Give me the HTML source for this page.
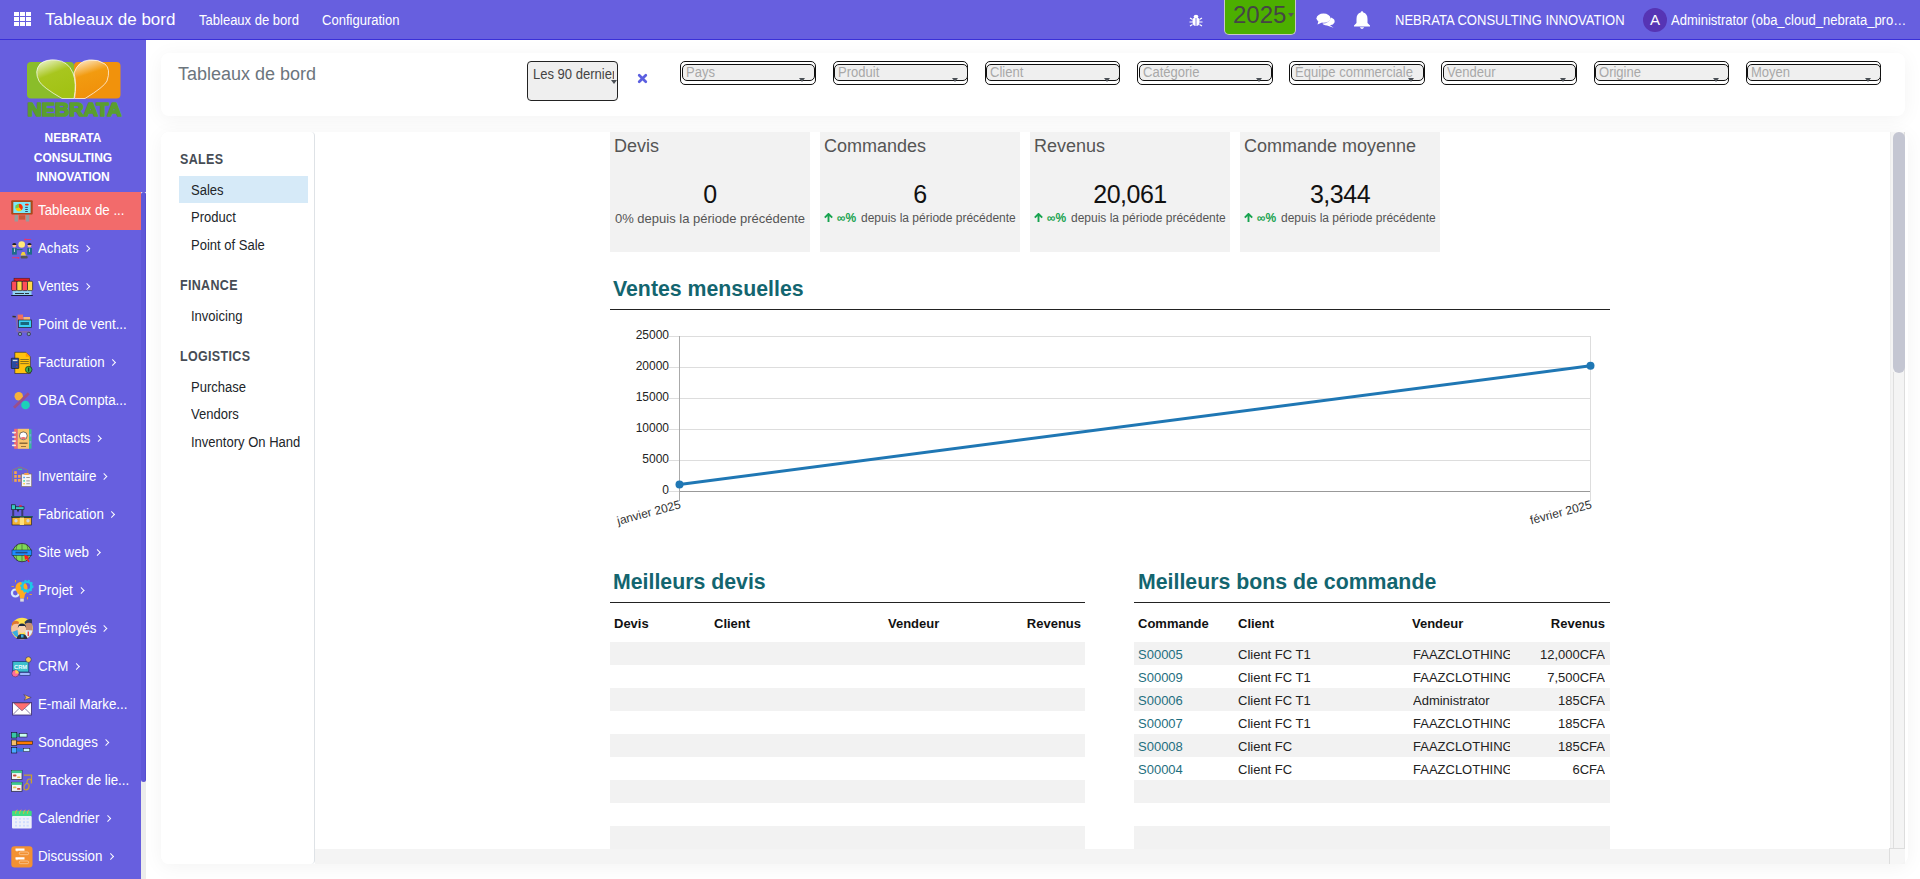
<!DOCTYPE html>
<html><head><meta charset="utf-8">
<style>
*{box-sizing:border-box;margin:0;padding:0}
html,body{width:1920px;height:879px;overflow:hidden;background:#fff;font-family:"Liberation Sans",sans-serif;color:#212529;position:relative}
.abs{position:absolute}
.nw{white-space:nowrap}
#nav{position:absolute;left:0;top:0;width:1920px;height:40px;background:#675fdf;border-bottom:1px solid #3a30d8}
#nav .t{position:absolute;color:#fff;white-space:nowrap}
#side{position:absolute;left:0;top:40px;width:146px;height:839px;background:#675fdf;overflow:hidden}
.mi{position:absolute;left:0;width:141px;height:38px;color:#fff;font-size:14px;white-space:nowrap}
.mi .ic{position:absolute;left:8px;top:4px}
.mi .tx{position:absolute;left:38px;top:10px;line-height:17px;transform:scaleX(.95);transform-origin:0 0}
.mi.act{background:#f26b6b}
.ch{display:inline-block;width:5px;height:5px;border-right:1.3px solid #fff;border-top:1.3px solid #fff;transform:rotate(45deg);margin-left:6px;position:relative;top:-2px}
.brand{position:absolute;left:0;width:146px;text-align:center;color:#fff;font-weight:bold;font-size:12px;line-height:19.5px}
#sbtrack{position:absolute;left:141px;top:152px;width:5px;height:687px;background:#ececec}
#sbthumb{position:absolute;left:141px;top:152px;width:5px;height:590px;background:#5f57d8;border-radius:3px;border-right:1px solid #554dd0}
/* main */
.panel{position:absolute;background:#fff;border-radius:8px;box-shadow:0 3px 20px rgba(0,0,0,.05)}
.cp-title{position:absolute;left:178px;top:64px;font-size:18px;color:#6c757d;white-space:nowrap}
.fsel{position:absolute;top:61px;width:135.5px;height:24px;border:1.5px solid #111;border-radius:5px;background:#fff}
.fsel .in{position:absolute;left:0.5px;right:-0.5px;top:1.5px;height:17px;border:1.5px solid #111;border-radius:5px;background:#efefef;overflow:hidden}
.fsel .ph{position:absolute;left:3px;top:0px;font-size:14px;line-height:15px;color:#a8a8a8;white-space:nowrap;transform:scaleX(.93);transform-origin:0 0}
.fsel .ar{position:absolute;right:9.5px;top:16px;width:0;height:0;border-left:3.5px solid transparent;border-right:3.5px solid transparent;border-top:4px solid #4a4f55}
.leftnav{position:absolute;left:161px;top:132px;width:154px;height:732px;border-right:1px solid #dee2e6;background:#fff}
.sec{position:absolute;left:180px;font-size:14.5px;font-weight:bold;color:#464c55;letter-spacing:.4px;transform:scaleX(.86);transform-origin:0 0;margin-top:-1px}
.lk{position:absolute;left:191px;font-size:14px;transform:scaleX(.93);transform-origin:0 0;margin-top:0px;color:#212529;white-space:nowrap}
.card{position:absolute;top:132px;width:200px;height:120px;background:#f2f2f2}
.card .h{position:absolute;left:4px;top:4px;font-size:18px;color:#555;white-space:nowrap}
.card .v{position:absolute;left:0;right:0;top:48px;text-align:center;font-size:25px;letter-spacing:-.5px;color:#111}
.card .s{position:absolute;left:0;right:0;top:79px;text-align:center;font-size:13px;color:#555;white-space:nowrap}
.card .g{color:#17a34f}
.card .ar2{position:absolute;left:4px;top:81px}
.card .inf{position:absolute;left:17px;top:79px;font-size:12px;font-weight:bold;color:#17a34f;white-space:nowrap}
.card .dp{position:absolute;left:41px;top:79px;font-size:12px;color:#555;white-space:nowrap}
.h2{position:absolute;font-size:21.3px;font-weight:bold;color:#13656f;white-space:nowrap}
.hr{position:absolute;height:1px;background:#222}
.tbl{position:absolute;width:476px}
.th{position:absolute;font-size:13px;font-weight:bold;color:#111;white-space:nowrap}
.row{position:absolute;left:0;width:476px;height:23px}
.row.g{background:#f2f2f2}
.td{position:absolute;top:5px;font-size:13px;color:#222;white-space:nowrap;overflow:hidden}
.lnk{color:#1f6f80}
</style></head><body>
<div id="nav">
  <svg class="abs" style="left:14px;top:12px" width="18" height="15" viewBox="0 0 18 15">
    <g fill="#fff"><rect x="0" y="0" width="5" height="4"/><rect x="6" y="0" width="5" height="4"/><rect x="12" y="0" width="5" height="4"/>
    <rect x="0" y="5" width="5" height="4"/><rect x="6" y="5" width="5" height="4"/><rect x="12" y="5" width="5" height="4"/>
    <rect x="0" y="10" width="5" height="4"/><rect x="6" y="10" width="5" height="4"/><rect x="12" y="10" width="5" height="4"/></g>
  </svg>
  <div class="t" style="left:45px;top:10px;font-size:17px">Tableaux de bord</div>
  <div class="t" style="left:199px;top:12px;font-size:14px;transform:scaleX(.93);transform-origin:0 0">Tableaux de bord</div>
  <div class="t" style="left:322px;top:12px;font-size:14px;transform:scaleX(.93);transform-origin:0 0">Configuration</div>
  <!-- right side -->
  <svg class="abs" style="left:1189px;top:13px" width="14" height="14" viewBox="0 0 14 14"><g fill="#fff"><ellipse cx="7" cy="8.5" rx="3.6" ry="4.5"/><ellipse cx="7" cy="3.5" rx="2.3" ry="1.8"/><path d="M1 5 L3.5 6.5 M13 5 L10.5 6.5 M0.5 9 L3.5 9 M13.5 9 L10.5 9 M1 13 L3.5 11.5 M13 13 L10.5 11.5" stroke="#fff" stroke-width="1.2"/></g><rect x="6.6" y="5" width=".8" height="8" fill="#675fdf"/></svg>
  <div class="abs" style="left:1224px;top:-2px;width:72px;height:37px;background:#4caf00;border:1px solid #c8c8c8;border-top:none;border-radius:0 0 5px 5px"></div>
  <div class="abs nw" style="left:1233px;top:1px;font-size:24px;color:#454545">2025</div>
  <div class="abs" style="left:1288px;top:13px;width:0;height:0;border-left:3.5px solid transparent;border-right:3.5px solid transparent;border-top:4px solid #555"></div>
  <svg class="abs" style="left:1316px;top:12px" width="20" height="17" viewBox="0 0 20 17"><ellipse cx="7.5" cy="6.2" rx="7" ry="4.6" fill="#fff"/><path d="M2.5 9 L1.5 12.5 L6 10.5 Z" fill="#fff"/><path d="M15 5.5 Q19.5 7 18.5 10.5 Q17.5 13 14 13.2 L17.5 15.8 L11 13.5 Q7 13 6.5 11.5 Q13 11.5 15 5.5 Z" fill="#fff"/></svg>
  <svg class="abs" style="left:1353px;top:10px" width="18" height="20" viewBox="0 0 18 20"><path d="M9 1.2 Q10.2 1.2 10.3 2.6 Q14.5 3.8 14.5 9 L14.5 13 L17 15.5 L17 16.5 L1 16.5 L1 15.5 L3.5 13 L3.5 9 Q3.5 3.8 7.7 2.6 Q7.8 1.2 9 1.2 Z" fill="#fff"/><path d="M6.8 17.3 Q9 20.5 11.2 17.3 Z" fill="#fff"/></svg>
  <div class="t" style="left:1395px;top:12px;font-size:14px;transform:scaleX(.93);transform-origin:0 0">NEBRATA CONSULTING INNOVATION</div>
  <div class="abs" style="left:1643px;top:8px;width:24px;height:24px;border-radius:50%;background:#5634b4;color:#fff;font-size:15px;text-align:center;line-height:24px">A</div>
  <div class="t" style="left:1671px;top:12px;font-size:14px;transform:scaleX(.93);transform-origin:0 0">Administrator (oba_cloud_nebrata_pro…</div>
</div>
<div id="side">
  <svg class="abs" style="left:26px;top:19px" width="98" height="58" viewBox="0 0 98 58">
    <defs>
      <linearGradient id="hg" x1="0" y1="0" x2="0.4" y2="1"><stop offset="0" stop-color="#f4f9e0"/><stop offset=".45" stop-color="#a8c61e"/><stop offset="1" stop-color="#a2c214"/></linearGradient>
      <linearGradient id="ho" x1="0" y1="0" x2="0.3" y2="1"><stop offset="0" stop-color="#fff3e0"/><stop offset=".45" stop-color="#f29b10"/><stop offset="1" stop-color="#f0900a"/></linearGradient>
    </defs>
    <rect x="1" y="3" width="47" height="36.5" rx="4" fill="#8abd2a"/>
    <rect x="48" y="3" width="46.5" height="36.5" rx="4" fill="#f1920c"/>
    <path d="M48 39.5 L36 39.5 Q16 28 13 22 Q8 12 14 5 Q20 0 30 1 Q42 2 47 14 Q51 25 48 39.5 Z" fill="url(#hg)" stroke="#fff" stroke-width=".7"/>
    <path d="M48.5 39.5 L59 39.5 Q78 28 81 22 Q85 10 79 5 Q72 0 63 1 Q52 2 48 14 Q51 25 48.5 39.5 Z" fill="url(#ho)" stroke="#fff" stroke-width=".7"/>
    <text x="48.5" y="56.5" text-anchor="middle" font-family="Liberation Sans" font-weight="bold" font-size="18" fill="#5a9e2e" stroke="#5a9e2e" stroke-width="1.6" stroke-linejoin="round" textLength="94" lengthAdjust="spacingAndGlyphs">NEBRATA</text>
  </svg>
  <div class="brand" style="top:89px">NEBRATA</div>
  <div class="brand" style="top:108.5px">CONSULTING</div>
  <div class="brand" style="top:128px">INNOVATION</div>
<div class="mi act" style="top:152px"><svg class="ic" width="30" height="30" viewBox="0 0 30 30"><rect x="3.2" y="4.3" width="21.5" height="14.3" rx="1" fill="#a8491a"/><rect x="5.3" y="6" width="17.3" height="11" fill="#7de8f8"/>
<path d="M11 11.5 L11 7.7 A3.8 3.8 0 0 1 13.7 14.2 Z" fill="#ff3300"/><path d="M11 11.5 L13.7 14.2 A3.8 3.8 0 0 1 7.4 12.6 Z" fill="#ffcc00"/><path d="M11 11.5 L7.4 12.6 A3.8 3.8 0 0 1 11 7.7 Z" fill="#7ac943"/>
<rect x="17" y="7.8" width="3.7" height="1.8" rx=".8" fill="#ff2a00"/><rect x="17.2" y="10.9" width="2.6" height=".9" fill="#335"/><rect x="17.2" y="13" width="2.6" height=".9" fill="#335"/><rect x="17.2" y="15" width="2.6" height=".9" fill="#335"/>
<rect x="6.6" y="19" width="3.4" height="6.5" fill="#9a9a9a"/><rect x="17.8" y="19" width="3.4" height="6.5" fill="#9a9a9a"/><rect x="10.9" y="19.3" width="6.2" height="4.3" fill="#c8573a"/></svg><div class="tx">Tableaux de ...</div></div>
<div class="mi" style="top:190px"><svg class="ic" width="30" height="30" viewBox="0 0 30 30"><circle cx="6.3" cy="11.6" r="1.9" fill="#f8c08a"/><path d="M4.2 11 A2.1 2.1 0 0 1 8.4 11 Z" fill="#222"/><rect x="4" y="14" width="4.8" height="6.6" fill="#1f6b8a"/><rect x="6" y="14.5" width=".8" height="3.5" fill="#ddd"/><rect x="8.5" y="15" width="6" height="1.2" fill="#1f6b8a"/>
<circle cx="21.5" cy="11.6" r="1.9" fill="#f8c08a"/><path d="M19.4 11 A2.1 2.1 0 0 1 23.6 11 Z" fill="#222"/><rect x="19.2" y="14" width="4.8" height="6.6" fill="#1f6b8a"/><rect x="21.2" y="14.5" width=".8" height="3.5" fill="#ddd"/>
<circle cx="13.7" cy="10.5" r="3.3" fill="#ffe97a"/><path d="M14 18 L16.5 18 L18 21.5 L12.5 21.5 Z" fill="#f2d03b"/><rect x="12.7" y="22" width="7" height="2.6" rx="1" fill="#555"/>
<rect x="16.5" y="5" width="6.5" height=".9" fill="#e8336d"/><rect x="4" y="23.3" width="6.5" height=".9" fill="#e8336d"/><circle cx="17.4" cy="5.4" r=".9" fill="#e8336d"/><circle cx="10.5" cy="23.8" r=".9" fill="#e8336d"/></svg><div class="tx">Achats<span class="ch"></span></div></div>
<div class="mi" style="top:228px"><svg class="ic" width="30" height="30" viewBox="0 0 30 30"><rect x="4.6" y="18" width="18.9" height="5" fill="#8fd3f4"/><rect x="3.2" y="23" width="21.6" height="1" fill="#1a1a3a"/><rect x="7" y="21" width="9" height=".8" fill="#111"/><rect x="17" y="21" width="4" height=".8" fill="#111"/>
<rect x="6" y="6.2" width="15.7" height="3" fill="#e01b24" stroke="#222" stroke-width=".5"/>
<rect x="3.6" y="9.2" width="5.3" height="9.4" rx="1.2" fill="#ff4d5a" stroke="#111" stroke-width=".6"/><rect x="8.9" y="9.2" width="5.3" height="9.4" rx="1.2" fill="#ffd94a" stroke="#111" stroke-width=".6"/><rect x="14.2" y="9.2" width="5.3" height="9.4" rx="1.2" fill="#ff4d5a" stroke="#111" stroke-width=".6"/><rect x="19.5" y="9.2" width="5.1" height="9.4" rx="1.2" fill="#ffd94a" stroke="#111" stroke-width=".6"/></svg><div class="tx">Ventes<span class="ch"></span></div></div>
<div class="mi" style="top:266px"><svg class="ic" width="30" height="30" viewBox="0 0 30 30"><path d="M4.5 6.6 L7.8 6.8 L9.5 18.5 Q8 21.5 10.5 21.8 L23 21.8" stroke="#8a6aa8" stroke-width="1.3" fill="none"/><path d="M4.5 6.6 L7.8 6.8" stroke="#333" stroke-width="1.5"/>
<rect x="9.6" y="4.6" width="5.4" height="5.6" fill="#f07060"/><rect x="15.4" y="7" width="6.6" height="3.2" fill="#f9b873"/><rect x="10.5" y="10" width="13" height="7.4" fill="#3ad0f5" stroke="#222" stroke-width=".7"/>
<rect x="12.5" y="12" width="8.5" height="3" fill="#0a3a4a" opacity=".7"/><circle cx="12" cy="24" r="1.7" fill="#80a0b0" stroke="#222" stroke-width=".6"/><circle cx="20.8" cy="24" r="1.7" fill="#80a0b0" stroke="#222" stroke-width=".6"/></svg><div class="tx">Point de vent...</div></div>
<div class="mi" style="top:304px"><svg class="ic" width="30" height="30" viewBox="0 0 30 30"><path d="M6.8 4.3 L17.8 4.3 L22.3 8.8 L22.3 25.5 L6.8 25.5 Z" fill="#ffc20e" stroke="#222" stroke-width=".6"/><path d="M17.8 4.3 L17.8 8.8 L22.3 8.8 Z" fill="#ff9a00"/>
<rect x="12.3" y="11.2" width="8.5" height=".8" fill="#6a5a20"/><rect x="12.3" y="13.2" width="8.5" height=".8" fill="#6a5a20"/><rect x="12.3" y="15.3" width="8.5" height=".8" fill="#6a5a20"/>
<rect x="3.3" y="10.2" width="7.5" height="10.3" rx=".6" fill="#2b4aa0" stroke="#111" stroke-width=".6"/><rect x="4.8" y="11.8" width="4.6" height="1.3" fill="#ddd"/><circle cx="8.8" cy="15.5" r=".6" fill="#d33"/><circle cx="8.8" cy="18.5" r=".6" fill="#d33"/>
<circle cx="20.7" cy="21.6" r="3.3" fill="#3cb44b" stroke="#111" stroke-width=".6"/><rect x="20.3" y="19.6" width=".9" height="4" fill="#111"/></svg><div class="tx">Facturation<span class="ch"></span></div></div>
<div class="mi" style="top:342px"><svg class="ic" width="30" height="30" viewBox="0 0 30 30"><circle cx="10.7" cy="10.3" r="4.2" fill="#f7b23b"/><circle cx="17.5" cy="19" r="4.3" fill="#1dd1b8"/><path d="M6 21.8 L20.8 7.2" stroke="#9b4f8a" stroke-width="2.8"/></svg><div class="tx">OBA Compta...</div></div>
<div class="mi" style="top:380px"><svg class="ic" width="30" height="30" viewBox="0 0 30 30"><rect x="6.2" y="4.8" width="3.5" height="20" fill="#f26b6b"/><rect x="9.7" y="4.8" width="11.3" height="20" fill="#f9c56e"/><rect x="21" y="5.2" width="2.5" height="19.5" fill="#3db99a"/><rect x="21.6" y="10" width="1.6" height="2.5" fill="#7aa0e0"/><rect x="21.6" y="17" width="1.6" height="2.5" fill="#7aa0e0"/>
<rect x="4" y="7.8" width="4" height="1.6" rx=".8" fill="#f0f0e8"/><rect x="4" y="12.2" width="4" height="1.6" rx=".8" fill="#f0f0e8"/><rect x="4" y="16.3" width="4" height="1.6" rx=".8" fill="#f0f0e8"/><rect x="4" y="20.6" width="4" height="1.6" rx=".8" fill="#f0f0e8"/>
<circle cx="15.3" cy="11.8" r="3.9" fill="#fff" stroke="#222" stroke-width=".6"/><path d="M12.2 14 Q15.3 12 18.4 14 Q15.3 16.5 12.2 14 Z" fill="#f07070"/><rect x="11.5" y="18.5" width="8" height="1.5" fill="#8a6a3a"/><rect x="13" y="22" width="5" height=".9" fill="#8a6a3a"/></svg><div class="tx">Contacts<span class="ch"></span></div></div>
<div class="mi" style="top:418px"><svg class="ic" width="30" height="30" viewBox="0 0 30 30"><path d="M4.5 19.8 L4.5 8 L12 5 L19.5 8 L19.5 12" stroke="#8a7a80" stroke-width="1" fill="none"/><rect x="10" y="6.8" width="4" height="1.3" fill="#3bd08f"/>
<rect x="6.2" y="9.2" width="2.6" height="2.8" fill="#f2a550"/><rect x="6.2" y="13" width="2.6" height="2.8" fill="#f2a550"/><rect x="6.2" y="17" width="2.6" height="2.8" fill="#f2a550"/><rect x="10" y="13" width="2.6" height="2.8" fill="#f2a550"/><rect x="10" y="17" width="2.6" height="2.8" fill="#f2a550"/>
<rect x="13.5" y="12" width="10.2" height="12.6" fill="#f4f4f6" stroke="#7a6a70" stroke-width=".7"/><rect x="16" y="11" width="5" height="2" rx="1" fill="#f2a550"/><rect x="15.2" y="14.8" width="1.8" height="1.4" fill="#4aa8f8"/><rect x="15.2" y="18.2" width="1.8" height="1.4" fill="#3de0a0"/><rect x="15.2" y="21" width="1.8" height="1.4" fill="#ffd84a"/><rect x="18.3" y="15" width="3.5" height="1" fill="#999"/><rect x="18.3" y="18.4" width="3.5" height="1" fill="#999"/><rect x="18.3" y="21.2" width="3.5" height="1" fill="#999"/></svg><div class="tx">Inventaire<span class="ch"></span></div></div>
<div class="mi" style="top:456px"><svg class="ic" width="30" height="30" viewBox="0 0 30 30"><rect x="3.3" y="4.8" width="4.2" height="4.7" fill="#38c9c0" stroke="#111" stroke-width=".6"/><rect x="7.5" y="6.8" width="8.5" height="2.5" fill="#38c9c0" stroke="#111" stroke-width=".6"/><rect x="11.2" y="5.2" width="2.5" height="1.5" fill="#e03030"/><path d="M8.6 9.5 L11.4 9.5 L10 12.5 Z" fill="#223"/>
<rect x="4.2" y="9.5" width="2" height="6.5" fill="#3a3a6a"/><rect x="13.3" y="9.5" width="2" height="6.5" fill="#3a3a6a"/><rect x="3" y="16" width="21.8" height="1.6" fill="#1e5a5a"/>
<rect x="4" y="17.6" width="19.5" height="7.4" fill="#f2b330" stroke="#111" stroke-width=".6"/><rect x="11.8" y="17.6" width="4.2" height="7.4" fill="#ffe07a"/><circle cx="8" cy="20.8" r="1.7" fill="#d0d4dc"/><circle cx="20" cy="20.8" r="1.7" fill="#d0d4dc"/></svg><div class="tx">Fabrication<span class="ch"></span></div></div>
<div class="mi" style="top:494px"><svg class="ic" width="30" height="30" viewBox="0 0 30 30"><circle cx="14" cy="14.6" r="9.2" fill="#7ed957" stroke="#222" stroke-width=".7"/><path d="M14 5.4 L14 23.8 M9 6.5 Q6 14.6 9 22.7 M19 6.5 Q22 14.6 19 22.7" stroke="#333" stroke-width=".5" fill="none"/>
<rect x="4" y="12" width="19.8" height="5.3" fill="#1e8cff" stroke="#123" stroke-width=".5"/><rect x="7.5" y="13.8" width="12" height="1.6" fill="#223" opacity=".6"/><path d="M16.2 16.4 L21.5 19.2 L19.6 20 L21.6 23.6 L20.3 24.3 L18.5 20.7 L17 22 Z" fill="#ff1a1a"/></svg><div class="tx">Site web<span class="ch"></span></div></div>
<div class="mi" style="top:532px"><svg class="ic" width="30" height="30" viewBox="0 0 30 30"><circle cx="7.4" cy="17" r="3.5" fill="none" stroke="#d6e6ff" stroke-width="2.2"/><path d="M13.5 6 Q19.5 6 19.5 12.5 Q19.5 16 17 18.5 L16 22.5 L12 22.5 L11.5 19 Q7 15 7.5 11 Q8.5 6 13.5 6 Z" fill="#ffab1f"/>
<circle cx="18.8" cy="10.3" r="4.6" fill="none" stroke="#1ec8e8" stroke-width="2.6"/><circle cx="18.8" cy="10.3" r="6" fill="none" stroke="#1ec8e8" stroke-width="1.4" stroke-dasharray="1.8 1.8"/><rect x="12.2" y="22.6" width="3.6" height="3" fill="#ddd"/>
<rect x="7" y="4" width=".9" height="2.3" fill="#f5a623"/><rect x="3.5" y="10" width="2.4" height=".9" fill="#f5a623"/><rect x="21.5" y="18" width="2.4" height=".9" fill="#f5a623"/><rect x="19" y="21" width=".9" height="2.3" fill="#f5a623"/></svg><div class="tx">Projet<span class="ch"></span></div></div>
<div class="mi" style="top:570px"><svg class="ic" width="30" height="30" viewBox="0 0 30 30"><circle cx="14" cy="14.5" r="10.8" fill="#ffe14d"/><path d="M3.5 17 Q4 8 8 7 Q11 7 11.5 11 L11 23 Q5 22 3.5 17 Z" fill="#f5c4a0"/><path d="M4 9 Q7 5 11 8 L10.5 10 Q6 9 4 12 Z" fill="#e0782a"/><path d="M4 18 L9.5 16 L10.5 24 Q6 22 4 18 Z" fill="#3aaee0"/>
<path d="M17 8 Q21 4.5 24 8 L24.5 20 Q21 24 18 24 Z" fill="#c89070"/><path d="M16.5 8 Q20 4 24 5.5 L24 9.5 Q20 8 17 10 Z" fill="#2e3a5a"/><path d="M17 16 L24.5 16.5 Q23.5 22 18 24.5 Z" fill="#dfeef8"/><rect x="19.6" y="17.5" width="1.3" height="4.5" fill="#e33"/>
<circle cx="14" cy="15" r="4" fill="#f8d2b0"/><path d="M9.8 14 Q10 9.5 14 9.5 Q18 9.5 18.2 14 L17 12 L11 12 Z" fill="#1e2a44"/><path d="M8.5 25 Q9.5 20 14 20 Q18.5 20 19.5 25 Z" fill="#2a3040"/><rect x="13" y="20.5" width="2.5" height="3" fill="#3aaee0"/></svg><div class="tx">Employés<span class="ch"></span></div></div>
<div class="mi" style="top:608px"><svg class="ic" width="30" height="30" viewBox="0 0 30 30"><rect x="4.8" y="9.5" width="16" height="10.5" fill="#3cc0cc" stroke="#1a2a6a" stroke-width=".7"/><text x="6" y="16.5" font-size="5.8" font-weight="bold" fill="#eafcff" font-family="Liberation Sans">CRM</text>
<rect x="11.8" y="20.5" width="10.2" height="3" fill="#9fb7ff" stroke="#1a2a6a" stroke-width=".6"/><circle cx="7.3" cy="21.4" r="3.5" fill="#ff6b9a" stroke="#1a2a6a" stroke-width=".5"/><path d="M7.3 21.4 L7.3 17.9 A3.5 3.5 0 0 1 10.8 21.4 Z" fill="#ffd04a"/>
<circle cx="20.4" cy="7.6" r="2.8" fill="#ffc94a" stroke="#1a2a6a" stroke-width=".6"/></svg><div class="tx">CRM<span class="ch"></span></div></div>
<div class="mi" style="top:646px"><svg class="ic" width="30" height="30" viewBox="0 0 30 30"><rect x="4.6" y="12.5" width="18.8" height="12.5" fill="#fff" stroke="#3a2a6a" stroke-width=".8"/><path d="M5 13 L14 24.5 M23 13 L14 24.5" stroke="#3a2a6a" stroke-width=".5" opacity=".0"/><path d="M5.5 13 L22.5 13 L14 20.8 Z" fill="#ff6f6f" stroke="#3a2a6a" stroke-width=".5"/>
<path d="M5 24.5 L11 18.5 M23 24.5 L17 18.5" stroke="#3a2a6a" stroke-width=".6"/><path d="M15.8 4.6 L23.2 7.5 L16.2 10.2 L17.8 7.4 Z" fill="#ffc45a" stroke="#2a2a5a" stroke-width=".5"/></svg><div class="tx">E-mail Marke...</div></div>
<div class="mi" style="top:684px"><svg class="ic" width="30" height="30" viewBox="0 0 30 30"><rect x="3.3" y="4.5" width="5.5" height="5.5" fill="#39c6a6" stroke="#112" stroke-width=".6"/><rect x="8.8" y="5.6" width="2.5" height="3.4" fill="#1b8a70"/><rect x="11.5" y="5.6" width="7.5" height="3.4" fill="#c8fff0" stroke="#112" stroke-width=".5"/>
<rect x="3.3" y="12" width="5.5" height="5.5" fill="#f5c06a" stroke="#112" stroke-width=".6"/><rect x="8.8" y="13.2" width="15.6" height="3.2" fill="#ff7a00" stroke="#321" stroke-width=".6"/>
<rect x="3.3" y="19.5" width="5.5" height="5.5" fill="#4aa8ff" stroke="#112" stroke-width=".6"/><rect x="8.8" y="20.3" width="6.5" height="3.3" fill="#2a7ad8"/><rect x="15.3" y="20.3" width="6.5" height="3.3" fill="#c8f4ff" stroke="#112" stroke-width=".5"/></svg><div class="tx">Sondages<span class="ch"></span></div></div>
<div class="mi" style="top:722px"><svg class="ic" width="30" height="30" viewBox="0 0 30 30"><rect x="3.5" y="4.5" width="10.5" height="9" fill="#f4f4f4" stroke="#223" stroke-width=".7"/><rect x="3.5" y="4.5" width="10.5" height="2.6" fill="#3cc88f"/><rect x="5" y="8.6" width="3.5" height="1.8" rx=".9" fill="#c84a3a"/><rect x="9" y="10.5" width="3.5" height="1.6" rx=".8" fill="#e8c050"/>
<rect x="3.5" y="16.3" width="10.5" height="9" fill="#f4f4f4" stroke="#223" stroke-width=".7"/><rect x="3.5" y="16.3" width="10.5" height="2.6" fill="#3cc88f"/><rect x="5" y="20.5" width="3.5" height="1.8" rx=".9" fill="#e8c050"/><rect x="9" y="22" width="3.5" height="1.8" rx=".9" fill="#c84a3a"/>
<path d="M16 9.2 L23.5 9.2 L23.5 17 M18.8 17.5 Q19 12.8 21.5 13 Q23.8 13.3 23.3 17.5 M16 21.8 Q16.5 17.5 19.5 17.5 Q22 18 20.5 22.5 Q18.5 24.5 16.5 23.5 Z" stroke="#c8a030" stroke-width="1.2" fill="none"/></svg><div class="tx">Tracker de lie...</div></div>
<div class="mi" style="top:760px"><svg class="ic" width="30" height="30" viewBox="0 0 30 30"><rect x="4" y="12" width="19.7" height="12.5" rx="1" fill="#eef0fa"/><rect x="4" y="6.8" width="19.7" height="5.3" rx="1" fill="#3ddc84"/>
<g fill="#cfdcff"><rect x="7" y="14" width="2" height="1.6"/><rect x="11" y="14" width="2" height="1.6"/><rect x="15" y="14" width="2" height="1.6"/><rect x="18.5" y="14" width="2.3" height="1.6"/><rect x="7" y="17.2" width="2" height="2"/><rect x="11" y="17.2" width="2" height="2"/><rect x="15" y="17.2" width="2" height="2"/><rect x="18.5" y="17.2" width="2.3" height="2"/><rect x="7" y="20.8" width="2" height="1.8"/><rect x="11" y="20.8" width="2" height="1.8"/><rect x="15" y="20.8" width="2" height="1.8"/><rect x="18.5" y="20.8" width="2.3" height="1.8"/></g>
<g stroke="#f2a93b" stroke-width=".9" fill="none"><path d="M7.5 9.8 Q7.8 5.3 9.5 6"/><path d="M11.5 9.8 Q11.8 5.3 13.5 6"/><path d="M15.5 9.8 Q15.8 5.3 17.5 6"/><path d="M19.3 9.8 Q19.6 5.3 21.3 6"/></g></svg><div class="tx">Calendrier<span class="ch"></span></div></div>
<div class="mi" style="top:798px"><svg class="ic" width="30" height="30" viewBox="0 0 30 30"><rect x="3.3" y="4.3" width="21.2" height="21.2" rx="3.2" fill="#f39132"/><path d="M7.5 6.5 L16.5 6.5 L16.5 8.8 L9.5 8.8 L9 10 L8.5 8.8 L7.5 8.8 Z" fill="#fff"/><rect x="11.3" y="10" width="9.3" height="2.7" rx="1.3" fill="none" stroke="#fde0c0" stroke-width=".6"/>
<path d="M7.5 15.3 L16.5 15.3 L16.5 17.6 L9.5 17.6 L9 18.8 L8.5 17.6 L7.5 17.6 Z" fill="#fff"/><rect x="11.3" y="19" width="9.3" height="2.7" rx="1.3" fill="none" stroke="#fde0c0" stroke-width=".6"/></svg><div class="tx">Discussion<span class="ch"></span></div></div>
  <div id="sbtrack"></div>
  <div id="sbthumb"></div>
</div>

<!-- control panel -->
<div class="panel" style="left:161px;top:53px;width:1744px;height:63px"></div>
<div class="cp-title">Tableaux de bord</div>
<div class="abs" style="left:527px;top:61px;width:91px;height:40px;background:#efefef;border:1px solid #222;border-radius:4px;overflow:hidden">
  <div class="abs" style="left:5px;top:0;width:81px;height:30px;overflow:hidden"><div class="abs nw" style="left:0;top:4px;font-size:14px;color:#444;transform:scaleX(.93);transform-origin:0 0">Les 90 derniers jours</div></div>
  <div class="abs" style="left:83px;top:18px;width:0;height:0;border-left:3.5px solid transparent;border-right:3.5px solid transparent;border-top:4px solid #4a4f55"></div>
</div>
<svg class="abs" style="left:637px;top:73px" width="11" height="11" viewBox="0 0 11 11"><path d="M2.2 2.2 L8.8 8.8 M8.8 2.2 L2.2 8.8" stroke="#5b5fe0" stroke-width="2.7" stroke-linecap="round"/></svg>
<div class="fsel" style="left:680.4px"><div class="in"><div class="ph">Pays</div></div><div class="ar"></div></div>
<div class="fsel" style="left:832.6px"><div class="in"><div class="ph">Produit</div></div><div class="ar"></div></div>
<div class="fsel" style="left:984.8px"><div class="in"><div class="ph">Client</div></div><div class="ar"></div></div>
<div class="fsel" style="left:1137.0px"><div class="in"><div class="ph">Catégorie</div></div><div class="ar"></div></div>
<div class="fsel" style="left:1289.2px"><div class="in"><div class="ph">Équipe commerciale</div></div><div class="ar"></div></div>
<div class="fsel" style="left:1441.4px"><div class="in"><div class="ph">Vendeur</div></div><div class="ar"></div></div>
<div class="fsel" style="left:1593.6px"><div class="in"><div class="ph">Origine</div></div><div class="ar"></div></div>
<div class="fsel" style="left:1745.8px"><div class="in"><div class="ph">Moyen</div></div><div class="ar"></div></div>

<!-- content panel -->
<div class="panel" style="left:161px;top:132px;width:1747px;height:732px;border-radius:8px"></div>
<div class="leftnav" style="border-radius:8px 4px 4px 8px"></div>
<div class="sec" style="top:152px">SALES</div>
<div class="abs" style="left:179px;top:176px;width:129px;height:27px;background:#d6eaf8"></div>
<div class="lk" style="top:182px">Sales</div>
<div class="lk" style="top:209px">Product</div>
<div class="lk" style="top:237px">Point of Sale</div>
<div class="sec" style="top:278px">FINANCE</div>
<div class="lk" style="top:308px">Invoicing</div>
<div class="sec" style="top:349px">LOGISTICS</div>
<div class="lk" style="top:379px">Purchase</div>
<div class="lk" style="top:406px">Vendors</div>
<div class="lk" style="top:434px">Inventory On Hand</div>

<!-- scrollbars -->
<div class="abs" style="left:1890px;top:132px;width:15px;height:717px;background:#f4f4f4;border-left:1px solid #eeeeee;border-right:1px solid #dddddd"></div><div class="abs" style="left:1893px;top:372px;width:1px;height:476px;background:#dedede"></div>
<div class="abs" style="left:1893px;top:132px;width:12px;height:241px;background:#c4c6d2;border-radius:6px"></div>
<div class="abs" style="left:315px;top:849px;width:1590px;height:15px;background:#f4f4f4"></div>
<div class="abs" style="left:1889px;top:848px;width:16px;height:16px;border-left:1px solid #dddddd;border-top:1px solid #dddddd;background:#f6f6f6;border-radius:0 0 6px 0"></div>

<!-- cards -->
<div class="card" style="left:610px"><div class="h">Devis</div><div class="v">0</div><div class="s">0% depuis la période précédente</div></div>
<div class="card" style="left:820px"><div class="h">Commandes</div><div class="v">6</div><svg class="ar2" width="9" height="9" viewBox="0 0 9 9"><path d="M4.5 9 L4.5 1 M0.8 4.6 L4.5 0.9 L8.2 4.6" stroke="#17a34f" stroke-width="1.9" fill="none"/></svg><div class="inf">∞%</div><div class="dp">depuis la période précédente</div></div>
<div class="card" style="left:1030px"><div class="h">Revenus</div><div class="v">20,061</div><svg class="ar2" width="9" height="9" viewBox="0 0 9 9"><path d="M4.5 9 L4.5 1 M0.8 4.6 L4.5 0.9 L8.2 4.6" stroke="#17a34f" stroke-width="1.9" fill="none"/></svg><div class="inf">∞%</div><div class="dp">depuis la période précédente</div></div>
<div class="card" style="left:1240px"><div class="h">Commande moyenne</div><div class="v">3,344</div><svg class="ar2" width="9" height="9" viewBox="0 0 9 9"><path d="M4.5 9 L4.5 1 M0.8 4.6 L4.5 0.9 L8.2 4.6" stroke="#17a34f" stroke-width="1.9" fill="none"/></svg><div class="inf">∞%</div><div class="dp">depuis la période précédente</div></div>

<!-- chart -->
<div class="h2" style="left:613px;top:277px">Ventes mensuelles</div>
<div class="hr" style="left:610px;top:309px;width:1000px"></div>
<svg class="abs" style="left:600px;top:320px" width="1020" height="230" viewBox="600 320 1020 230">
<line x1="669" y1="491.5" x2="1590.5" y2="491.5" stroke="#dddddd" stroke-width="1"/>
<line x1="679.5" y1="491.5" x2="1590.5" y2="491.5" stroke="#999999" stroke-width="1"/>
<text x="669" y="494.0" text-anchor="end" font-size="12" fill="#222" font-family="Liberation Sans">0</text>
<line x1="669" y1="460.5" x2="1590.5" y2="460.5" stroke="#dddddd" stroke-width="1"/>
<text x="669" y="463.0" text-anchor="end" font-size="12" fill="#222" font-family="Liberation Sans">5000</text>
<line x1="669" y1="429.5" x2="1590.5" y2="429.5" stroke="#dddddd" stroke-width="1"/>
<text x="669" y="432.0" text-anchor="end" font-size="12" fill="#222" font-family="Liberation Sans">10000</text>
<line x1="669" y1="398.5" x2="1590.5" y2="398.5" stroke="#dddddd" stroke-width="1"/>
<text x="669" y="401.0" text-anchor="end" font-size="12" fill="#222" font-family="Liberation Sans">15000</text>
<line x1="669" y1="367.5" x2="1590.5" y2="367.5" stroke="#dddddd" stroke-width="1"/>
<text x="669" y="370.0" text-anchor="end" font-size="12" fill="#222" font-family="Liberation Sans">20000</text>
<line x1="669" y1="336.5" x2="1590.5" y2="336.5" stroke="#dddddd" stroke-width="1"/>
<text x="669" y="339.0" text-anchor="end" font-size="12" fill="#222" font-family="Liberation Sans">25000</text>
<line x1="679.5" y1="336" x2="679.5" y2="501.0" stroke="#aaaaaa" stroke-width="1"/>
<line x1="1590.5" y1="336" x2="1590.5" y2="501.0" stroke="#dddddd" stroke-width="1"/>
<line x1="679.5" y1="484.4" x2="1590.5" y2="365.8" stroke="#1f77b4" stroke-width="3"/>
<circle cx="679.5" cy="484.4" r="4" fill="#1f77b4"/><circle cx="1590.5" cy="365.8" r="4" fill="#1f77b4"/>
<text x="681.5" y="508.0" text-anchor="end" font-size="12" fill="#333" font-family="Liberation Sans" transform="rotate(-15 681.5 508.0)">janvier 2025</text>
<text x="1592.5" y="508.0" text-anchor="end" font-size="12" fill="#333" font-family="Liberation Sans" transform="rotate(-15 1592.5 508.0)">février 2025</text>
</svg>

<!-- tables -->
<div class="h2" style="left:613px;top:570px">Meilleurs devis</div>
<div class="hr" style="left:610px;top:602px;width:475px"></div>
<div class="h2" style="left:1138px;top:570px">Meilleurs bons de commande</div>
<div class="hr" style="left:1134px;top:602px;width:476px"></div>
<div class="th" style="left:614px;top:616px">Devis</div>
<div class="th" style="left:714px;top:616px">Client</div>
<div class="th" style="left:888px;top:616px">Vendeur</div>
<div class="th" style="left:610px;width:471px;text-align:right;top:616px">Revenus</div>
<div class="row g" style="left:610px;top:642px;width:475px">
</div>
<div class="row" style="left:610px;top:665px;width:475px">
</div>
<div class="row g" style="left:610px;top:688px;width:475px">
</div>
<div class="row" style="left:610px;top:711px;width:475px">
</div>
<div class="row g" style="left:610px;top:734px;width:475px">
</div>
<div class="row" style="left:610px;top:757px;width:475px">
</div>
<div class="row g" style="left:610px;top:780px;width:475px">
</div>
<div class="row" style="left:610px;top:803px;width:475px">
</div>
<div class="row g" style="left:610px;top:826px;width:475px">
</div>
<div class="row" style="left:610px;top:849px;width:475px">
</div>
<div class="th" style="left:1138px;top:616px">Commande</div>
<div class="th" style="left:1238px;top:616px">Client</div>
<div class="th" style="left:1412px;top:616px">Vendeur</div>
<div class="th" style="left:1134px;width:471px;text-align:right;top:616px">Revenus</div>
<div class="row g" style="left:1134px;top:642px;width:476px">
<div class="td lnk" style="left:4px">S00005</div><div class="td" style="left:104px">Client FC T1</div><div class="td" style="left:279px;width:97px">FAAZCLOTHING</div><div class="td" style="left:376px;width:95px;text-align:right">12,000CFA</div>
</div>
<div class="row" style="left:1134px;top:665px;width:476px">
<div class="td lnk" style="left:4px">S00009</div><div class="td" style="left:104px">Client FC T1</div><div class="td" style="left:279px;width:97px">FAAZCLOTHING</div><div class="td" style="left:376px;width:95px;text-align:right">7,500CFA</div>
</div>
<div class="row g" style="left:1134px;top:688px;width:476px">
<div class="td lnk" style="left:4px">S00006</div><div class="td" style="left:104px">Client FC T1</div><div class="td" style="left:279px;width:97px">Administrator</div><div class="td" style="left:376px;width:95px;text-align:right">185CFA</div>
</div>
<div class="row" style="left:1134px;top:711px;width:476px">
<div class="td lnk" style="left:4px">S00007</div><div class="td" style="left:104px">Client FC T1</div><div class="td" style="left:279px;width:97px">FAAZCLOTHING</div><div class="td" style="left:376px;width:95px;text-align:right">185CFA</div>
</div>
<div class="row g" style="left:1134px;top:734px;width:476px">
<div class="td lnk" style="left:4px">S00008</div><div class="td" style="left:104px">Client FC</div><div class="td" style="left:279px;width:97px">FAAZCLOTHING</div><div class="td" style="left:376px;width:95px;text-align:right">185CFA</div>
</div>
<div class="row" style="left:1134px;top:757px;width:476px">
<div class="td lnk" style="left:4px">S00004</div><div class="td" style="left:104px">Client FC</div><div class="td" style="left:279px;width:97px">FAAZCLOTHING</div><div class="td" style="left:376px;width:95px;text-align:right">6CFA</div>
</div>
<div class="row g" style="left:1134px;top:780px;width:476px">
</div>
<div class="row" style="left:1134px;top:803px;width:476px">
</div>
<div class="row g" style="left:1134px;top:826px;width:476px">
</div>
<div class="row" style="left:1134px;top:849px;width:476px">
</div>
</body></html>
